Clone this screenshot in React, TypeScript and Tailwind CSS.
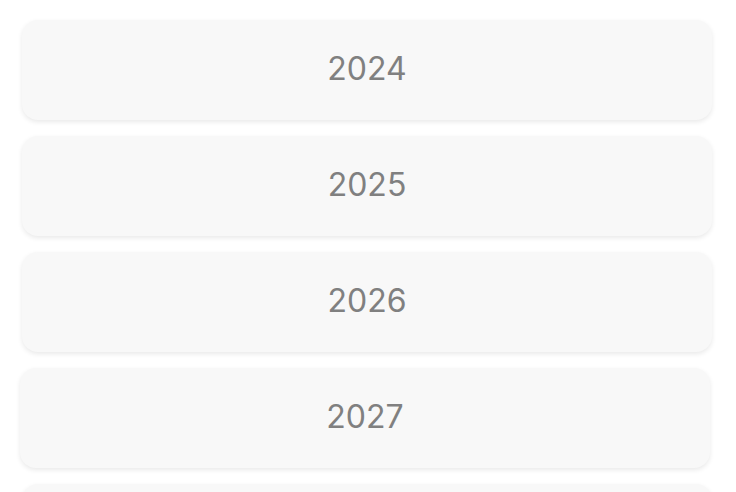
import React from "react";

const years: (number | null)[] = [2024, 2025, 2026, 2027, null];

export default function App() {
  return (
    <div
      className="h-[492px] w-[736px] overflow-hidden bg-white pt-5 pl-[22px] pr-[24px]"
      style={{ fontFamily: "Inter, 'Noto Sans', sans-serif" }}
    >
      <div className="flex flex-col gap-4">
        {years.map((y, i) => (
          <div
            key={i}
            className={
              "flex h-[100px] shrink-0 items-center justify-center rounded-2xl bg-[#f8f8f8] shadow-[0_2px_5px_rgba(0,0,0,0.09)]" +
              (y === 2027 ? " -translate-x-[2px]" : "")
            }
          >
            {y !== null && (
              <span className="-mt-0.5 text-[32px] font-normal leading-none text-[#808080]">{y}</span>
            )}
          </div>
        ))}
      </div>
    </div>
  );
}
